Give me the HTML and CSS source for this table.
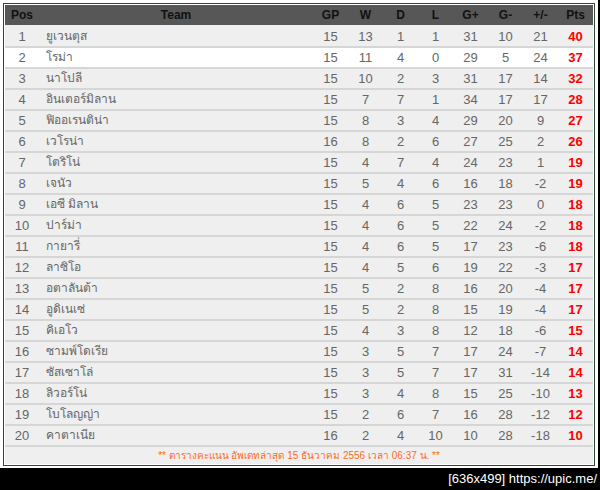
FILE: index.html
```html
<!DOCTYPE html>
<html lang="th">
<head>
<meta charset="utf-8">
<title>ตารางคะแนน</title>
<link rel="stylesheet" href="styles.css">
</head>
<body>
<div class="frame">
  <div class="box">
    <table class="standings">
      <colgroup>
        <col class="c-pos"><col class="c-team">
        <col class="c-num"><col class="c-num"><col class="c-num"><col class="c-num">
        <col class="c-num"><col class="c-num"><col class="c-num"><col class="c-num">
      </colgroup>
      <thead>
        <tr><th>Pos</th><th>Team</th><th>GP</th><th>W</th><th>D</th><th>L</th><th>G+</th><th>G-</th><th>+/-</th><th>Pts</th></tr>
      </thead>
      <tbody>
        <tr><td>1</td><td class="team">ยูเวนตุส</td><td>15</td><td>13</td><td>1</td><td>1</td><td>31</td><td>10</td><td>21</td><td class="pts">40</td></tr>
        <tr class="hl"><td>2</td><td class="team">โรม่า</td><td>15</td><td>11</td><td>4</td><td>0</td><td>29</td><td>5</td><td>24</td><td class="pts">37</td></tr>
        <tr><td>3</td><td class="team">นาโปลี</td><td>15</td><td>10</td><td>2</td><td>3</td><td>31</td><td>17</td><td>14</td><td class="pts">32</td></tr>
        <tr><td>4</td><td class="team">อินเตอร์มิลาน</td><td>15</td><td>7</td><td>7</td><td>1</td><td>34</td><td>17</td><td>17</td><td class="pts">28</td></tr>
        <tr><td>5</td><td class="team">ฟิออเรนติน่า</td><td>15</td><td>8</td><td>3</td><td>4</td><td>29</td><td>20</td><td>9</td><td class="pts">27</td></tr>
        <tr><td>6</td><td class="team">เวโรน่า</td><td>16</td><td>8</td><td>2</td><td>6</td><td>27</td><td>25</td><td>2</td><td class="pts">26</td></tr>
        <tr><td>7</td><td class="team">โตริโน่</td><td>15</td><td>4</td><td>7</td><td>4</td><td>24</td><td>23</td><td>1</td><td class="pts">19</td></tr>
        <tr><td>8</td><td class="team">เจนัว</td><td>15</td><td>5</td><td>4</td><td>6</td><td>16</td><td>18</td><td>-2</td><td class="pts">19</td></tr>
        <tr><td>9</td><td class="team">เอซี มิลาน</td><td>15</td><td>4</td><td>6</td><td>5</td><td>23</td><td>23</td><td>0</td><td class="pts">18</td></tr>
        <tr><td>10</td><td class="team">ปาร์ม่า</td><td>15</td><td>4</td><td>6</td><td>5</td><td>22</td><td>24</td><td>-2</td><td class="pts">18</td></tr>
        <tr><td>11</td><td class="team">กายารี่</td><td>15</td><td>4</td><td>6</td><td>5</td><td>17</td><td>23</td><td>-6</td><td class="pts">18</td></tr>
        <tr><td>12</td><td class="team">ลาซิโอ</td><td>15</td><td>4</td><td>5</td><td>6</td><td>19</td><td>22</td><td>-3</td><td class="pts">17</td></tr>
        <tr><td>13</td><td class="team">อตาลันต้า</td><td>15</td><td>5</td><td>2</td><td>8</td><td>16</td><td>20</td><td>-4</td><td class="pts">17</td></tr>
        <tr><td>14</td><td class="team">อูดิเนเซ่</td><td>15</td><td>5</td><td>2</td><td>8</td><td>15</td><td>19</td><td>-4</td><td class="pts">17</td></tr>
        <tr><td>15</td><td class="team">คิเอโว</td><td>15</td><td>4</td><td>3</td><td>8</td><td>12</td><td>18</td><td>-6</td><td class="pts">15</td></tr>
        <tr><td>16</td><td class="team">ซามพ์โดเรีย</td><td>15</td><td>3</td><td>5</td><td>7</td><td>17</td><td>24</td><td>-7</td><td class="pts">14</td></tr>
        <tr><td>17</td><td class="team">ซัสเซาโล่</td><td>15</td><td>3</td><td>5</td><td>7</td><td>17</td><td>31</td><td>-14</td><td class="pts">14</td></tr>
        <tr><td>18</td><td class="team">ลิวอร์โน่</td><td>15</td><td>3</td><td>4</td><td>8</td><td>15</td><td>25</td><td>-10</td><td class="pts">13</td></tr>
        <tr><td>19</td><td class="team">โบโลญญ่า</td><td>15</td><td>2</td><td>6</td><td>7</td><td>16</td><td>28</td><td>-12</td><td class="pts">12</td></tr>
        <tr><td>20</td><td class="team">คาตาเนีย</td><td>16</td><td>2</td><td>4</td><td>10</td><td>10</td><td>28</td><td>-18</td><td class="pts">10</td></tr>
      </tbody>
      <tfoot>
        <tr><td colspan="10">** ตารางคะแนน อัพเดทล่าสุด 15 ธันวาคม 2556 เวลา 06:37 น. **</td></tr>
      </tfoot>
    </table>
  </div>
</div>
<div class="watermark">[636x499] https://upic.me/</div>
</body>
</html>
```
FILE: styles.css
```css
html, body {
  margin: 0;
  padding: 0;
  background: #000;
}
body {
  width: 600px;
  height: 490px;
  overflow: hidden;
  font-family: "Liberation Sans", Arial, sans-serif;
}
.frame {
  width: 598px;
  box-sizing: border-box;
  background: #fff;
  padding: 3px 3px 2px;
}
.box {
  border: 1px solid #2e4a2e;
  padding: 1px;
  background: #fff;
}
.standings {
  width: 588px;
  border-collapse: collapse;
  table-layout: fixed;
  background: #efefef;
}
.c-pos { width: 34px; }
.c-team { width: 274px; }
.c-num { width: 35px; }
.standings th {
  background: #575757;
  color: #111;
  font-size: 12px;
  font-weight: bold;
  height: 20px;
  line-height: 20px;
  padding: 0;
  text-align: center;
}
.standings tbody td {
  height: 19px;
  line-height: 19px;
  padding: 0;
  text-align: center;
  color: #666;
  font-size: 13px;
  border-top: 2px solid #d6d6d6;
  white-space: nowrap;
  overflow: hidden;
}
.standings tbody tr:first-child td {
  border-top-color: #efefef;
}
.standings tbody td.team {
  text-align: left;
  padding-left: 7px;
  font-size: 12px;
}
.standings tbody td.pts {
  color: #ff0000;
  font-weight: bold;
}
.standings tbody tr.hl td {
  background: #fff;
}
.standings tfoot td {
  height: 17px;
  line-height: 17px;
  padding: 0;
  text-align: center;
  color: #ff6a1a;
  font-size: 10px;
  white-space: nowrap;
  border-top: 2px solid #d6d6d6;
}
.watermark {
  color: #fff;
  text-align: right;
  font-family: "Liberation Sans", Arial, sans-serif;
  font-size: 13px;
  line-height: 21px;
  padding-right: 3px;
}
```
